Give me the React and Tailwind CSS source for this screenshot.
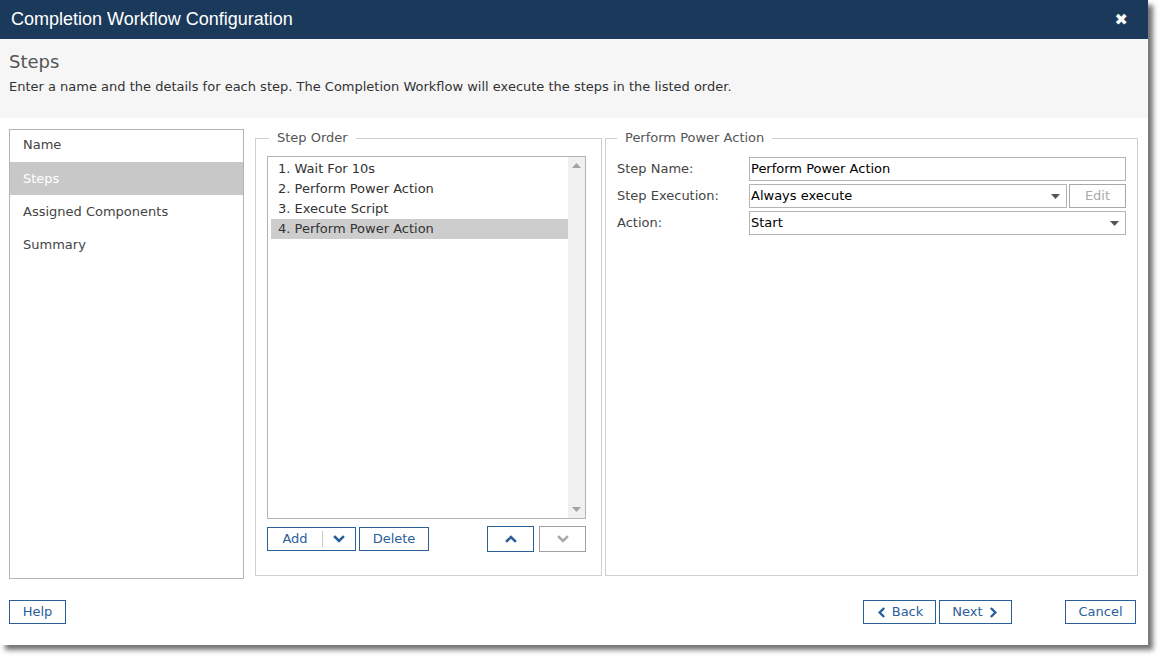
import React from "react";

const F = { fontFamily: '"DejaVu Sans", Verdana, sans-serif' };

function Chev({ dir = "down", className = "", size = 12, color = "#2a6099" }) {
  const paths = {
    down: "M2 4 L6 8 L10 4",
    up: "M2 8 L6 4 L10 8",
    left: "M8 2 L4 6 L8 10",
    right: "M4 2 L8 6 L4 10",
  };
  return (
    <svg width={size} height={size} viewBox="0 0 12 12" className={className}>
      <path d={paths[dir]} fill="none" stroke={color} strokeWidth="2.6" strokeLinecap="square" strokeLinejoin="miter" />
    </svg>
  );
}

function Tri({ up = false, color = "#555", className = "" }) {
  return (
    <svg width="9" height="5" viewBox="0 0 9 5" className={className}>
      <path d={up ? "M0 5 L4.5 0 L9 5 Z" : "M0 0 L9 0 L4.5 5 Z"} fill={color} />
    </svg>
  );
}

function Btn({ children, className = "" }) {
  return (
    <div className={"h-[24px] border border-[#2a6099] bg-white text-[#2a6099] text-[13px] flex items-center justify-center " + className}>
      {children}
    </div>
  );
}

export default function App() {
  const nav = ["Name", "Steps", "Assigned Components", "Summary"];
  const steps = ["1. Wait For 10s", "2. Perform Power Action", "3. Execute Script", "4. Perform Power Action"];
  return (
    <div className="w-[1163px] h-[662px] bg-white" style={F}>
      <div className="w-[1148px] h-[645px] bg-white flex flex-col shadow-[5px_5px_5px_rgba(0,0,0,0.55)]">
        {/* title */}
        <div className="h-[39px] bg-[#1b3a5b] flex items-center justify-between pl-[11px] pr-[20px] shrink-0">
          <span className="text-white text-[18px]" style={{ fontFamily: '"Liberation Sans", Arial, sans-serif' }}>
            Completion Workflow Configuration
          </span>
          <span className="text-white text-[16px] font-bold leading-none" style={{ fontFamily: '"DejaVu Sans", sans-serif' }}>✖</span>
        </div>
        {/* header */}
        <div className="h-[79px] bg-[#f6f6f6] pl-[9px] pt-[12px] shrink-0">
          <div className="text-[18px] leading-[22px] text-[#555]">Steps</div>
          <div className="text-[13px] leading-[16px] text-[#333] mt-[6px]">
            Enter a name and the details for each step. The Completion Workflow will execute the steps in the listed order.
          </div>
        </div>
        {/* body */}
        <div className="flex px-[9px] pt-[11px] shrink-0">
          <div className="w-[235px] h-[450px] border border-[#b4b4b4] shrink-0">
            {nav.map((n, i) => (
              <div
                key={n}
                className={
                  "flex items-center pl-[13px] text-[13px] " +
                  (i === 1 ? "bg-[#c8c8c8] text-white" : "text-[#444]") +
                  (i === 0 ? " h-[32px] pb-[2px]" : " h-[33px]")
                }
              >
                {n}
              </div>
            ))}
          </div>
          <fieldset className="ml-[11px] w-[347px] h-[446px] border border-[#cfcfcf] pl-[11px] pr-[10px] shrink-0 mt-[1px]">
            <legend className="px-[8px] text-[13px] leading-[16px] text-[#555]" style={{ marginLeft: 2 }}>Step Order</legend>
            <div className="mt-[10px] w-[319px] h-[363px] border border-[#b4b4b4] flex">
              <div className="flex-1 pt-[2px] pl-[3px]">
                {steps.map((s, i) => (
                  <div
                    key={i}
                    className={"h-[20px] flex items-center pl-[7px] text-[13px] text-[#333] " + (i === 3 ? "bg-[#cdcdcd]" : "")}
                  >
                    {s}
                  </div>
                ))}
              </div>
              <div className="w-[17px] bg-[#f0f0f0] flex flex-col justify-between items-center py-[6px]">
                <Tri up color="#a3a3a3" />
                <Tri color="#a3a3a3" />
              </div>
            </div>
            <div className="flex items-center mt-[7px]">
              <div className="w-[89px] h-[24px] border border-[#2a6099] flex items-center">
                <div className="w-[54px] text-center text-[13px] text-[#2a6099]">Add</div>
                <div className="w-px h-[16px] bg-[#c8c8c8]" />
                <div className="flex-1 flex justify-center">
                  <Chev dir="down" size={12} />
                </div>
              </div>
              <Btn className="ml-[3px] w-[70px]">Delete</Btn>
              <div className="ml-[58px] w-[47px] h-[26px] border border-[#2a6099] flex items-center justify-center">
                <Chev dir="up" size={12} />
              </div>
              <div className="ml-[5px] w-[47px] h-[26px] border border-[#a0a0a0] flex items-center justify-center">
                <Chev dir="down" size={12} color="#a8a8a8" />
              </div>
            </div>
          </fieldset>
          <fieldset className="ml-[3px] w-[533px] h-[446px] border border-[#cfcfcf] px-[11px] shrink-0 mt-[1px]">
            <legend className="px-[8px] text-[13px] leading-[16px] text-[#555]" style={{ marginLeft: 0 }}>Perform Power Action</legend>
            <div className="mt-[11px] flex flex-col gap-[3px]">
              <div className="flex items-center">
                <div className="w-[132px] text-[13px] text-[#444]">Step Name:</div>
                <div className="w-[377px] h-[24px] border border-[#b4b4b4] flex items-center pl-[1px] text-[13px] text-black">
                  Perform Power Action
                </div>
              </div>
              <div className="flex items-center">
                <div className="w-[132px] text-[13px] text-[#444]">Step Execution:</div>
                <div className="w-[318px] h-[24px] border border-[#b4b4b4] flex items-center justify-between pl-[1px] pr-[6px] text-[13px] text-black">
                  <span>Always execute</span>
                  <Tri />
                </div>
                <div className="ml-[2px] w-[57px] h-[24px] border border-[#a8a8a8] flex items-center justify-center text-[13px] text-[#aaa]">
                  Edit
                </div>
              </div>
              <div className="flex items-center">
                <div className="w-[132px] text-[13px] text-[#444]">Action:</div>
                <div className="w-[377px] h-[24px] border border-[#b4b4b4] flex items-center justify-between pl-[1px] pr-[6px] text-[13px] text-black">
                  <span>Start</span>
                  <Tri />
                </div>
              </div>
            </div>
          </fieldset>
        </div>
        {/* footer */}
        <div className="flex items-center px-[9px] pt-[21px]">
          <Btn className="w-[57px]">Help</Btn>
          <div className="flex-1" />
          <Btn className="w-[73px] gap-[5px]">
            <Chev dir="left" size={11} />
            <span>Back</span>
          </Btn>
          <Btn className="ml-[3px] w-[73px] gap-[5px]">
            <span>Next</span>
            <Chev dir="right" size={11} />
          </Btn>
          <Btn className="ml-[53px] w-[71px] mr-[3px]">Cancel</Btn>
        </div>
      </div>
    </div>
  );
}
